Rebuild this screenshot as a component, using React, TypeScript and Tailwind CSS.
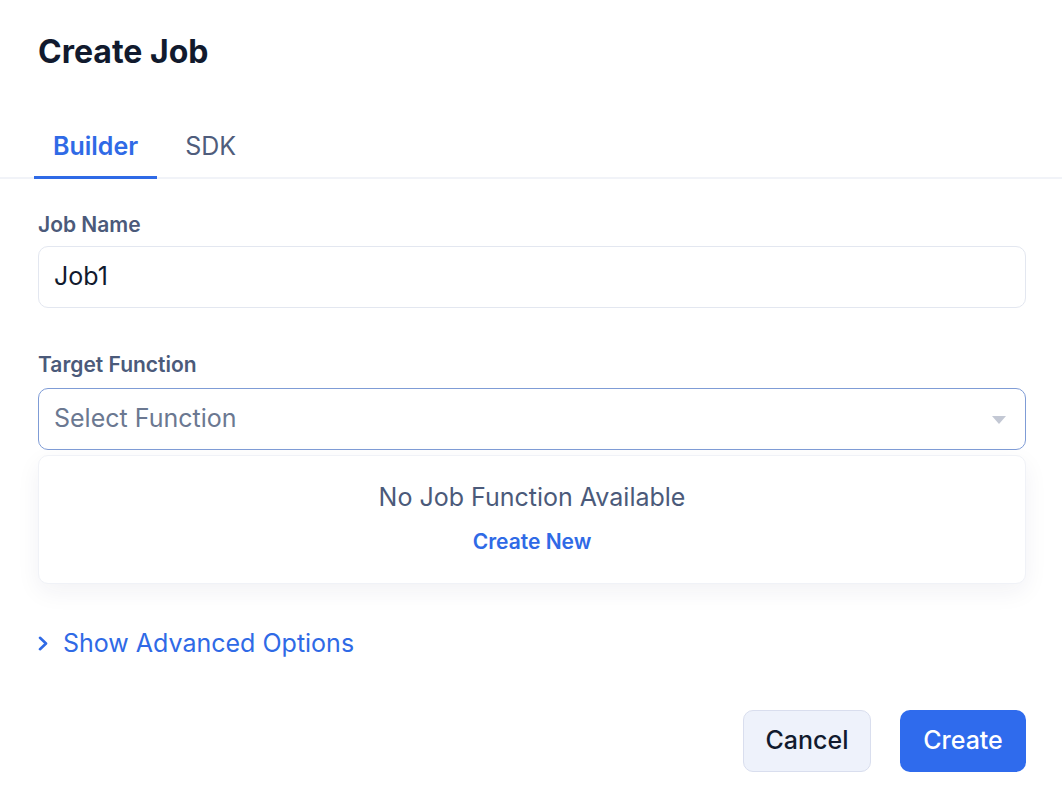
export default function App() {
  return (
    <div
      className="w-[1062px] h-[798px] bg-white overflow-hidden"
      style={{ fontFamily: "Inter, 'Noto Sans', sans-serif" }}
    >
      <div className="px-[38px] pt-[32px]">
        <h1 className="text-[32px] leading-[40px] font-bold text-[#111a2e]">Create Job</h1>
      </div>

      {/* tabs */}
      <div className="mt-[58px] border-b-2 border-[#f1f3f8] flex px-[34px]">
        <button className="px-[19px] pb-[14px] text-[25px] leading-[32px] font-semibold text-[#2f6ae6] border-b-[3px] border-[#2f6ae6] -mb-[2px]">
          Builder
        </button>
        <button className="ml-[9px] px-[19px] pb-[14px] text-[25px] leading-[32px] text-[#4f5d7c] border-b-[3px] border-transparent -mb-[2px]">
          SDK
        </button>
      </div>

      <div className="pl-[38px] pr-[36px] mt-[32px] flex flex-col">
        <label className="text-[21px] leading-[28px] font-semibold text-[#4b5a7a]">Job Name</label>
        <div className="mt-[7px] h-[62px] rounded-[10px] border border-[#e3e7f0] flex items-center px-[15px] text-[25px] text-[#111a2e]">
          Job1
        </div>

        <label className="mt-[43px] text-[21px] leading-[28px] font-semibold text-[#4b5a7a]">Target Function</label>
        <div className="mt-[9px] h-[62px] rounded-[10px] border border-[#7f9cd6] flex items-center justify-between pl-[15px] pr-[19px] text-[25px] text-[#6b7891]">
          <span>Select Function</span>
          <svg width="14" height="9" viewBox="0 0 14 9" className="mt-[2px]">
            <path d="M0 0 H14 L7 8 Z" fill="#c3c8d4" />
          </svg>
        </div>

        <div className="mt-[5px] h-[129px] rounded-[10px] border border-[#f0f2f7] bg-white shadow-[0_8px_24px_rgba(30,41,80,0.06)] flex flex-col items-center pt-[25px]">
          <div className="text-[25px] leading-[32px] text-[#4b5a7a]">No Job Function Available</div>
          <button className="mt-[16px] text-[21px] leading-[26px] font-semibold text-[#2f6ae6]">Create New</button>
        </div>

        <button className="mt-[43px] flex items-center gap-[14px] text-[25px] leading-[32px] text-[#2f6ae6]">
          <svg width="11" height="15" viewBox="0 0 11 15" className="mt-[1px]">
            <path d="M2 1.8 L8 7.5 L2 13.2" fill="none" stroke="#2f6ae6" strokeWidth="2.6" strokeLinecap="round" strokeLinejoin="round" />
          </svg>
          <span>Show Advanced Options</span>
        </button>

        <div className="mt-[51px] flex justify-end gap-[29px]">
          <button className="w-[128px] h-[62px] rounded-[10px] bg-[#eef2fb] border border-[#d9deee] text-[25px] font-medium text-[#111a2e]">
            Cancel
          </button>
          <button className="w-[126px] h-[62px] rounded-[10px] bg-[#2f6bed] text-[25px] font-medium text-white">
            Create
          </button>
        </div>
      </div>
    </div>
  );
}
